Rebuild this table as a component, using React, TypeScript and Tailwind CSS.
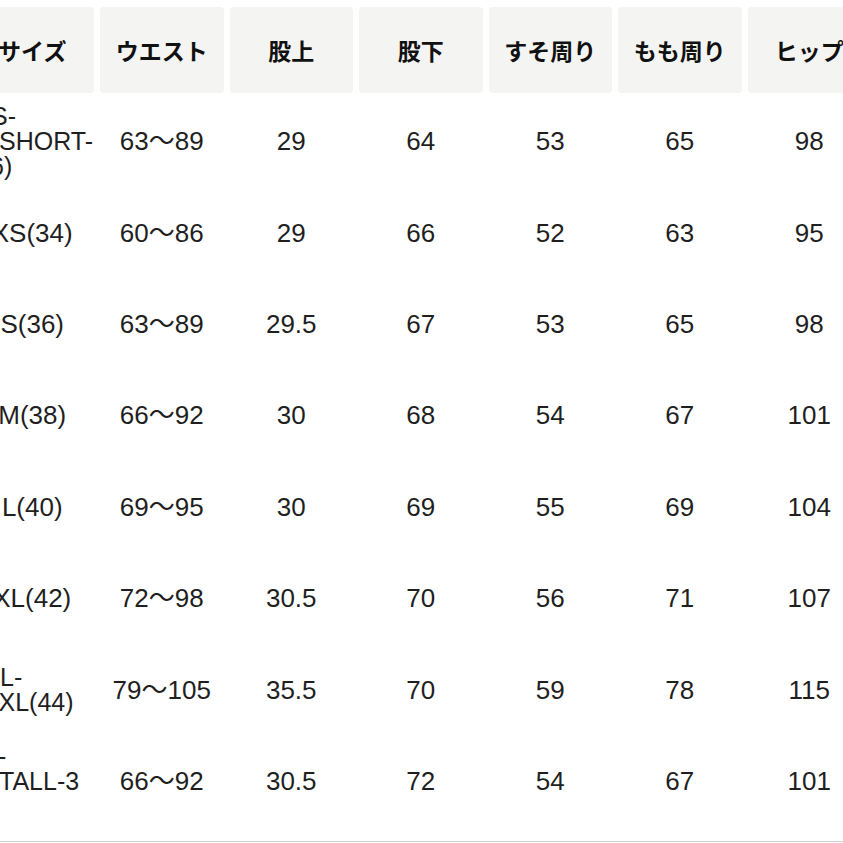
import React from "react";

type Line = { text: string; ml: number };
type Row = { size: string | Line[]; cells: string[] };

const headers = ["サイズ", "ウエスト", "股上", "股下", "すそ周り", "もも周り", "ヒップ"];

const rows: Row[] = [
  {
    size: [
      { text: "S-", ml: 20.5 },
      { text: "SHORT-", ml: 28.5 },
      { text: "6)", ml: 19.5 },
    ],
    cells: ["63〜89", "29", "64", "53", "65", "98"],
  },
  { size: "XS(34)", cells: ["60〜86", "29", "66", "52", "63", "95"] },
  { size: "S(36)", cells: ["63〜89", "29.5", "67", "53", "65", "98"] },
  { size: "M(38)", cells: ["66〜92", "30", "68", "54", "67", "101"] },
  { size: "L(40)", cells: ["69〜95", "30", "69", "55", "69", "104"] },
  { size: "XL(42)", cells: ["72〜98", "30.5", "70", "56", "71", "107"] },
  {
    size: [
      { text: "L-", ml: 29.5 },
      { text: "XL(44)", ml: 28 },
    ],
    cells: ["79〜105", "35.5", "70", "59", "78", "115"],
  },
  {
    size: [
      { text: "-", ml: 27.5 },
      { text: "TALL-3", ml: 28.5 },
      { text: "(36)", ml: -15.5 },
    ],
    cells: ["66〜92", "30.5", "72", "54", "67", "101"],
  },
];

const grid =
  "grid grid-cols-[123.5px_123.5px_123.5px_123.5px_123.5px_123.5px_123.5px] gap-x-[6px] ml-[-29.5px]";

export default function App() {
  return (
    <div
      className="w-[843px] h-[843px] overflow-hidden bg-white text-[#1f1f1f]"
      style={{ fontFamily: '"Liberation Sans", "Noto Sans CJK JP", sans-serif' }}
    >
      <div className={`${grid} mt-[7px]`}>
        {headers.map((h) => (
          <div
            key={h}
            className="h-[86px] rounded-[4px] bg-[#f4f4f2] flex items-center justify-center text-[23px] font-bold text-[#111] whitespace-nowrap"
            style={{ fontFamily: '"Noto Sans CJK JP", sans-serif' }}
          >
            {h}
          </div>
        ))}
      </div>

      <div className="mt-[3px]">
        {rows.map((r, i) => (
          <div key={i} className={`${grid} h-[91.4px] text-[26px]`}>
            {typeof r.size === "string" ? (
              <div className="flex items-center justify-center whitespace-nowrap">{r.size}</div>
            ) : (
              <div className="flex flex-col justify-center text-[25px] leading-[25px]">
                {r.size.map((l, j) => (
                  <div key={j} className="whitespace-nowrap" style={{ marginLeft: l.ml }}>
                    {l.text}
                  </div>
                ))}
              </div>
            )}
            {r.cells.map((c, j) => (
              <div key={j} className="flex items-center justify-center whitespace-nowrap">
                {c}
              </div>
            ))}
          </div>
        ))}
      </div>

      <div className="mt-[14px] h-px bg-[#cfcfcf]" />
    </div>
  );
}
